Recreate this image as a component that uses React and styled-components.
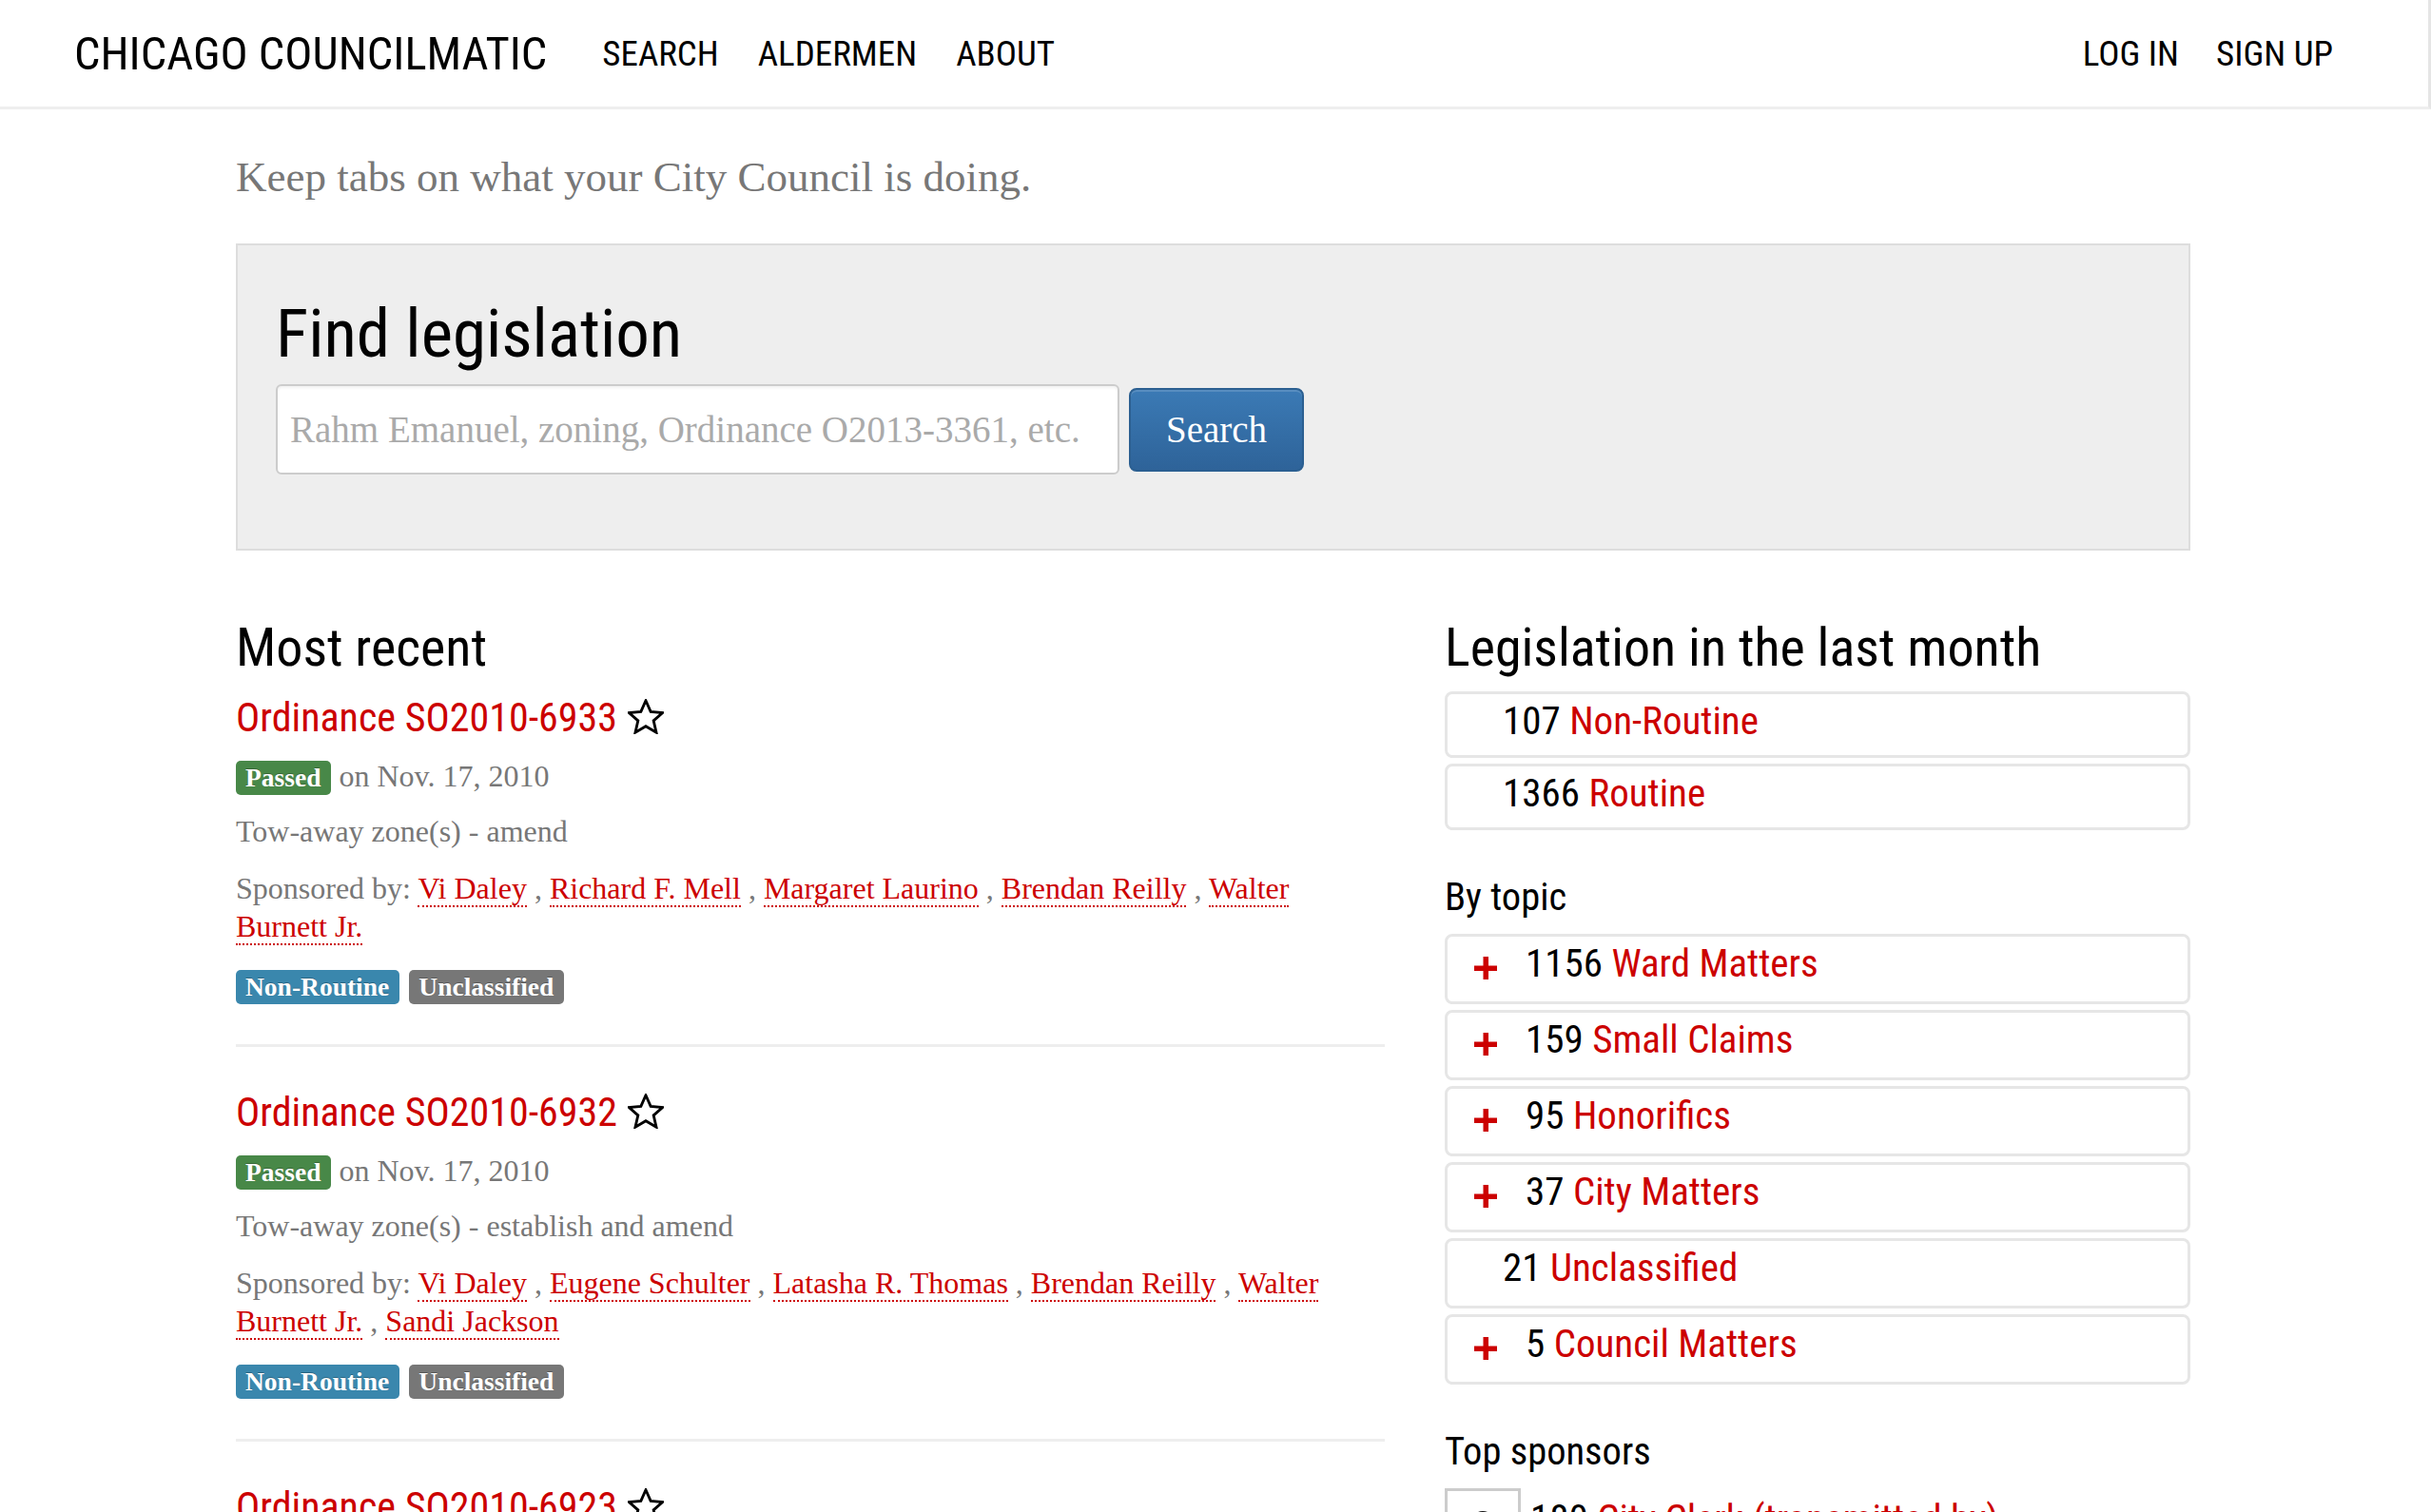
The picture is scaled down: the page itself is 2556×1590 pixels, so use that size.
import styled, { createGlobalStyle } from "styled-components";

const sans = `"Roboto Condensed", "DejaVu Sans Condensed", sans-serif`;
const serif = `"Liberation Serif", Georgia, serif`;
const red = "#c00";

const GlobalStyle = createGlobalStyle`
  * { box-sizing: border-box; }
  html, body {
    margin: 0;
    padding: 0;
    background: #fff;
    overflow: hidden;
  }
  body {
    font-family: ${serif};
    color: #333;
  }
  a { text-decoration: none; }
`;

const recent = [
  {
    id: "SO2010-6933",
    date: "Nov. 17, 2010",
    title: "Tow-away zone(s) - amend",
    sponsors: ["Vi Daley", "Richard F. Mell", "Margaret Laurino", "Brendan Reilly", "Walter Burnett Jr."],
  },
  {
    id: "SO2010-6932",
    date: "Nov. 17, 2010",
    title: "Tow-away zone(s) - establish and amend",
    sponsors: ["Vi Daley", "Eugene Schulter", "Latasha R. Thomas", "Brendan Reilly", "Walter Burnett Jr.", "Sandi Jackson"],
  },
  {
    id: "SO2010-6923",
    date: "Nov. 17, 2010",
    title: "Tow-away zone(s) - amend",
    sponsors: ["Vi Daley", "Brendan Reilly"],
  },
];

const topics = [
  { count: 1156, name: "Ward Matters", more: true },
  { count: 159, name: "Small Claims", more: true },
  { count: 95, name: "Honorifics", more: true },
  { count: 37, name: "City Matters", more: true },
  { count: 21, name: "Unclassified", more: false },
  { count: 5, name: "Council Matters", more: true },
];

function Star() {
  return (
    <StarIcon viewBox="2 2 20 19.4" width="38" height="37">
      <path
        d="M12 2.9l2.7 6.1 6.6.6-5 4.4 1.5 6.5L12 17.1l-5.8 3.4 1.5-6.5-5-4.4 6.6-.6z"
        fill="none"
        stroke="#000"
        strokeWidth="1.5"
      />
    </StarIcon>
  );
}

function Plus() {
  return (
    <PlusIcon viewBox="0 0 24 24" width="24" height="24">
      <rect x="9.5" y="0" width="5.5" height="24" fill={red} />
      <rect x="0" y="9.5" width="24" height="5.5" fill={red} />
    </PlusIcon>
  );
}

function Legislation({ item }) {
  return (
    <Item>
      <ItemTitle>
        <RedLink href="#">Ordinance {item.id}</RedLink>
        <Star />
      </ItemTitle>
      <Meta>
        <Badge $color="#488848">Passed</Badge> on {item.date}
      </Meta>
      <Meta>{item.title}</Meta>
      <Meta>
        Sponsored by:{" "}
        {item.sponsors.map((s, i) => (
          <span key={s}>
            <Sponsor href="#">{s}</Sponsor>
            {i < item.sponsors.length - 1 ? " , " : ""}
          </span>
        ))}
      </Meta>
      <Tags>
        <Badge $color="#3a87ad">Non-Routine</Badge>
        <Badge $color="#777">Unclassified</Badge>
      </Tags>
    </Item>
  );
}

export default function App() {
  return (
    <>
      <GlobalStyle />
      <Navbar>
        <Brand href="#">CHICAGO COUNCILMATIC</Brand>
        <NavList>
          <li><NavLink href="#">SEARCH</NavLink></li>
          <li><NavLink href="#">ALDERMEN</NavLink></li>
          <li><NavLink href="#">ABOUT</NavLink></li>
        </NavList>
        <NavRight>
          <li><NavLink href="#">LOG IN</NavLink></li>
          <li><NavLink href="#">SIGN UP</NavLink></li>
        </NavRight>
      </Navbar>

      <Container>
        <Tagline>Keep tabs on what your City Council is doing.</Tagline>

        <Jumbotron>
          <FindTitle>Find legislation</FindTitle>
          <SearchForm onSubmit={(e) => e.preventDefault()}>
            <SearchInput placeholder="Rahm Emanuel, zoning, Ordinance O2013-3361, etc." />
            <SearchButton type="submit">Search</SearchButton>
          </SearchForm>
        </Jumbotron>

        <Columns>
          <section>
            <SectionTitle>Most recent</SectionTitle>
            {recent.map((item) => (
              <Legislation key={item.id} item={item} />
            ))}
          </section>

          <section>
            <SectionTitle>Legislation in the last month</SectionTitle>
            <BoxList $top="16px">
              <StatBox>
                <Count>107</Count> <RedLink href="#">Non-Routine</RedLink>
              </StatBox>
              <StatBox>
                <Count>1366</Count> <RedLink href="#">Routine</RedLink>
              </StatBox>
            </BoxList>

            <SubTitle>By topic</SubTitle>
            <BoxList>
              {topics.map((t) => (
                <TopicBox key={t.name}>
                  <Expander $empty={!t.more}>{t.more && <Plus />}</Expander>
                  <span>
                    <Count>{t.count}</Count> <RedLink href="#">{t.name}</RedLink>
                  </span>
                </TopicBox>
              ))}
            </BoxList>

            <SubTitle>Top sponsors</SubTitle>
            <SponsorRow>
              <Avatar>
                <svg viewBox="0 0 74 94" width="74" height="94">
                  <circle cx="37" cy="34" r="13" fill="#111" />
                  <path d="M12 94c0-20 11-32 25-32s25 12 25 32z" fill="#111" />
                </svg>
              </Avatar>
              <SponsorText>
                <Count>180</Count> <RedLink href="#">City Clerk (transmitted by)</RedLink>
              </SponsorText>
            </SponsorRow>
          </section>
        </Columns>
      </Container>
    </>
  );
}

const Navbar = styled.nav`
  display: flex;
  align-items: center;
  height: 115px;
  padding: 0 100px 0 78px;
  border-bottom: 3px solid #eee;
  border-right: 3px solid #e5e5e5;
  font-family: ${sans};
`;

const Brand = styled.a`
  font-size: 48.5px;
  color: #000;
  margin-right: 58px;
`;

const NavList = styled.ul`
  display: flex;
  gap: 41px;
  list-style: none;
  margin: 0;
  padding: 0;
`;

const NavRight = styled(NavList)`
  margin-left: auto;
  gap: 39px;
`;

const NavLink = styled.a`
  font-size: 37px;
  color: #000;
`;

const Container = styled.main`
  width: 2055px;
  margin-left: 248px;
`;

const Tagline = styled.p`
  font-size: 45px;
  line-height: 50px;
  color: #777;
  margin: 46px 0 45px;
`;

const Jumbotron = styled.section`
  background: #eee;
  border: 2px solid #ddd;
  padding: 53px 40px 78px;
`;

const FindTitle = styled.h1`
  font-family: ${sans};
  font-weight: normal;
  font-size: 71px;
  line-height: 80px;
  color: #000;
  margin: 0 0 13px;
`;

const SearchForm = styled.form`
  display: flex;
  align-items: center;
  gap: 10px;
`;

const SearchInput = styled.input`
  width: 887px;
  height: 95px;
  padding: 0 13px;
  border: 2px solid #ccc;
  border-radius: 6px;
  box-shadow: inset 0 2px 3px rgba(0, 0, 0, 0.06);
  font-family: ${serif};
  font-size: 39px;
  color: #555;
  background: #fff;

  &::placeholder {
    color: #aaa;
  }
`;

const SearchButton = styled.button`
  width: 184px;
  height: 88px;
  border: 2px solid #2b5f91;
  border-radius: 8px;
  background: linear-gradient(to bottom, #3b7ab5, #2e6399);
  box-shadow: inset 0 2px 0 rgba(255, 255, 255, 0.15);
  color: #fff;
  font-family: ${serif};
  font-size: 39px;
`;

const Columns = styled.div`
  display: grid;
  grid-template-columns: 1208px 784px;
  column-gap: 63px;
  margin-top: 72px;
  align-items: start;
`;

const SectionTitle = styled.h2`
  font-family: ${sans};
  font-weight: normal;
  font-size: 56px;
  line-height: 60px;
  color: #000;
  margin: 0;
`;

const Item = styled.article`
  padding: 20px 0 42px;
  border-bottom: 3px solid #eee;

  & + & {
    padding-top: 45px;
  }
`;

const ItemTitle = styled.h4`
  display: flex;
  align-items: center;
  gap: 11px;
  font-family: ${sans};
  font-weight: normal;
  font-size: 42px;
  line-height: 48px;
  margin: 0;
`;

const StarIcon = styled.svg`
  flex: none;
  margin-top: -3px;
`;

const RedLink = styled.a`
  color: ${red};
`;

const Meta = styled.p`
  font-size: 32px;
  line-height: 40px;
  color: #777;
  margin: 18px 0 0;

  &:first-of-type {
    margin-top: 17px;
  }

  &:last-of-type {
    margin-top: 20px;
  }
`;

const Sponsor = styled.a`
  color: ${red};
  border-bottom: 2px dotted ${red};
`;

const Badge = styled.span`
  display: inline-block;
  padding: 0 11px 0 10px;
  border-radius: 5px;
  background: ${({ $color }) => $color};
  color: #fff;
  font-family: ${serif};
  font-weight: bold;
  font-size: 27.5px;
  line-height: 36px;
  text-shadow: 0 -1px 0 rgba(0, 0, 0, 0.25);
  vertical-align: baseline;
`;

const Tags = styled.div`
  display: flex;
  gap: 10px;
  margin-top: 26px;
`;

const BoxList = styled.div`
  display: flex;
  flex-direction: column;
  gap: 6px;
  margin-top: ${({ $top }) => $top || "0"};
`;

const StatBox = styled.div`
  border: 3px solid #e6e6e6;
  border-radius: 8px;
  padding: 0 0 8px 58px;
  font-family: ${sans};
  font-size: 41px;
  line-height: 56px;
`;

const Count = styled.span`
  color: #000;
`;

const SubTitle = styled.h4`
  font-family: ${sans};
  font-weight: normal;
  font-size: 40.5px;
  line-height: 48px;
  color: #000;
  margin: 46px 0 15px;
`;

const TopicBox = styled.div`
  display: flex;
  align-items: flex-start;
  height: 74px;
  border: 3px solid #e6e6e6;
  border-radius: 8px;
  padding: 0 0 12px 28px;
  font-family: ${sans};
  font-size: 41px;
  line-height: 56px;
`;

const Expander = styled.span`
  flex: none;
  width: ${({ $empty }) => ($empty ? "30px" : "24px")};
  margin-right: ${({ $empty }) => ($empty ? "0" : "30px")};
  padding-top: 21px;
  line-height: 0;
`;

const PlusIcon = styled.svg`
  display: block;
`;

const SponsorRow = styled.div`
  display: flex;
  align-items: flex-start;
  gap: 10px;
`;

const Avatar = styled.div`
  flex: none;
  width: 80px;
  height: 100px;
  border: 3px solid #ccc;
  background: #fff;
  line-height: 0;
`;

const SponsorText = styled.span`
  font-family: ${sans};
  font-size: 41px;
  line-height: 48px;
  padding-top: 8px;
`;
